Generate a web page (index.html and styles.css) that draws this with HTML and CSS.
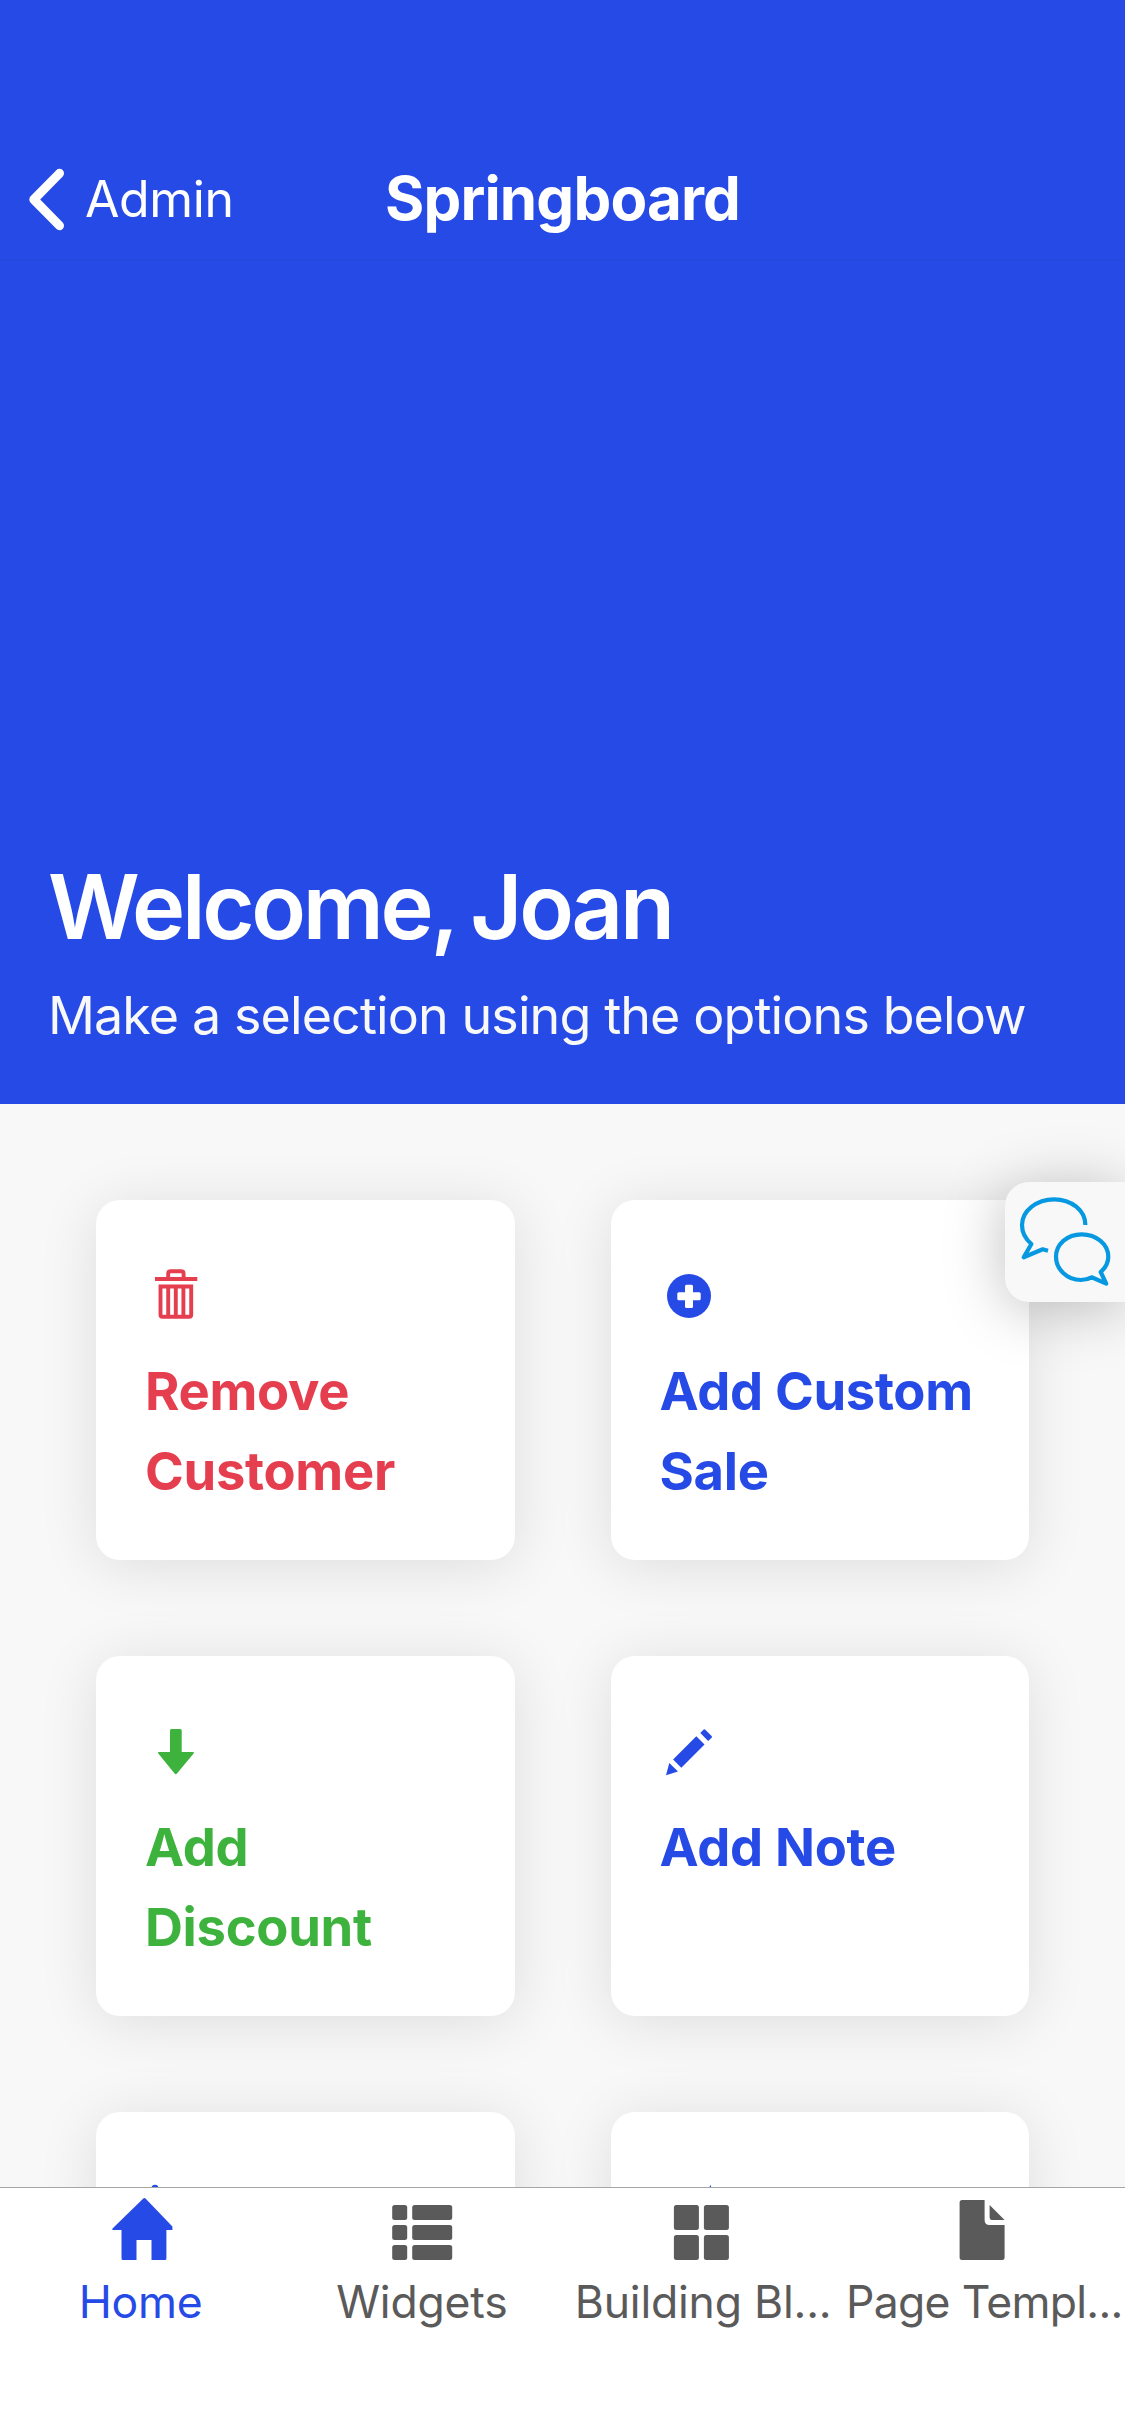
FILE: index.html
```html
<!DOCTYPE html>
<html lang="en">
<head>
<meta charset="utf-8">
<title>Springboard</title>
<link rel="stylesheet" href="styles.css">
</head>
<body>
<div class="app">
  <header class="hero">
    <nav class="navbar">
      <a class="back">
        <svg class="back-icon" width="37" height="64" viewBox="0 0 37 64"><path d="M31.500 6.300 5.800 32.500l25.700 26.200" fill="none" stroke="currentColor" stroke-width="9" stroke-linecap="round" stroke-linejoin="round"/></svg>
        <span class="back-label">Admin</span>
      </a>
      <span class="title">Springboard</span>
    </nav>
    <div class="welcome">
      <h1 class="greeting">Welcome, Joan</h1>
      <p class="hint">Make a selection using the options below</p>
    </div>
  </header>

  <main class="content">
    <div class="cards">
      <a class="card danger">
        <svg class="card-icon" viewBox="0 0 64 96" fill="none" stroke="currentColor" stroke-width="3.900"><path d="M11 31h42.300M24.200 31v-5.500q0-2.300 2.300-2.300h10.800q2.300 0 2.300 2.300V31M16.500 38.500h30.700v28.300q0 2-2 2H18.500q-2 0-2-2ZM24.200 38v31M31.800 38v31M39.400 38v31"/></svg>
        <span class="card-label">Remove Customer</span>
      </a>
      <a class="card primary">
        <svg class="card-icon" viewBox="0 0 64 96" fill="currentColor"><circle cx="30" cy="48" r="22"/><rect x="26" y="36.700" width="8" height="23.300" rx="1.500" fill="#fff"/><rect x="18.300" y="44.300" width="23.400" height="8" rx="1.500" fill="#fff"/></svg>
        <span class="card-label">Add Custom Sale</span>
      </a>
      <a class="card success">
        <svg class="card-icon" viewBox="0 0 64 96" fill="currentColor"><path d="M27.500 25h8.700q1.500 0 1.500 1.500V48H49q1.800 0 .6 1.500L33 69.500q-1.200 1.400-2.400 0L14.300 49.500Q13.200 48 15 48h11V26.500q0-1.500 1.500-1.500Z"/></svg>
        <span class="card-label">Add Discount</span>
      </a>
      <a class="card primary">
        <svg class="card-icon" viewBox="0 0 64 96" fill="currentColor"><path d="m37.300 32.300 8.200 8.300L22.300 63.700l-8.200-8.300ZM10.300 59l8.700 8.400-12 3.900ZM41.300 29l3.100-3.200q.9-.9 1.900 0l6.300 6.200q.9.900 0 1.800L49.200 37Z"/></svg>
        <span class="card-label">Add Note</span>
      </a>
      <a class="card primary">
        <svg class="card-icon" viewBox="0 0 64 96" fill="currentColor"><path d="M7 33q0-3 1-7 3-2.500 6 0 1 4 1 7v35H7Z"/></svg>
      </a>
      <a class="card primary">
        <svg class="card-icon" viewBox="0 0 64 96" fill="currentColor"><path d="M52 24.800 54 70H20Z"/></svg>
      </a>
    </div>
  </main>

  <footer class="tabbar">
    <a class="tab active">
      <svg class="tab-icon" viewBox="0 0 64 64" fill="currentColor"><path d="M34.300 1.600q1.100-1.200 2.200 0L63.400 29.500V33H57.400v28.500q0 1.500-1.500 1.500H42.500V43h-15v20H14q-1.500 0-1.500-1.500V33H4q-1.500 0-.5-1.400Z"/></svg>
      <span class="tab-label">Home</span>
    </a>
    <a class="tab">
      <svg class="tab-icon" viewBox="0 0 64 64" fill="currentColor"><rect x="2.200" y="8" width="15" height="15" rx="2.500"/><rect x="22.200" y="8" width="40" height="15" rx="2.500"/><rect x="2.200" y="28" width="15" height="15" rx="2.500"/><rect x="22.200" y="28" width="40" height="15" rx="2.500"/><rect x="2.200" y="48" width="15" height="15" rx="2.500"/><rect x="22.200" y="48" width="40" height="15" rx="2.500"/></svg>
      <span class="tab-label">Widgets</span>
    </a>
    <a class="tab">
      <svg class="tab-icon" viewBox="0 0 64 64" fill="currentColor"><rect x="2.900" y="8" width="25" height="25" rx="2.500"/><rect x="32.900" y="8" width="25" height="25" rx="2.500"/><rect x="2.900" y="38" width="25" height="25" rx="2.500"/><rect x="32.900" y="38" width="25" height="25" rx="2.500"/></svg>
      <span class="tab-label">Building Bl...</span>
    </a>
    <a class="tab">
      <svg class="tab-icon" viewBox="0 0 64 64" fill="currentColor"><path d="M10.100 3h22.500v20q0 5 5 5h15v32.500q0 2.500-2.500 2.500h-40q-2.500 0-2.500-2.500v-55Q7.600 3 10.100 3ZM37.600 8l15 15H40q-2.400 0-2.400-2.500Z"/></svg>
      <span class="tab-label tight">Page Templ...</span>
    </a>
  </footer>

  <a class="chat">
    <svg viewBox="0 0 120 120" fill="none" stroke="#0699e2" stroke-width="4.200" stroke-linejoin="round"><path d="M80.400 43C80.400 28.500 66.500 17.300 49 17.300S17 29 17 43c0 7.500 3.500 14 9.400 19L18.700 75.300l19-8 5.300 1.400"/><path d="M95.700 90c4.800-4.300 7.600-9.500 7.600-15.300 0-12.400-11.800-22.400-26.600-22.400S51 62.300 51 74.700 62 98 75.700 98q6 0 11-2.700l14.500 6.300Z"/></svg>
  </a>
</div>
</body>
</html>
```
FILE: styles.css
```css
* {
  box-sizing: border-box;
}

body {
  margin: 0;
  font-family: Inter, "Liberation Sans", sans-serif;
  background: #f8f8f8;
}

h1, p {
  margin: 0;
}

.app {
  position: relative;
  display: flex;
  flex-direction: column;
  height: 2436px;
  overflow: hidden;
}

.hero {
  flex: none;
  display: flex;
  flex-direction: column;
  justify-content: space-between;
  height: 1104px;
  padding-top: 132px;
  background: #264ae6;
  color: #fff;
}

.navbar {
  display: grid;
  grid-template-columns: 1fr auto 1fr;
  align-items: center;
  height: 128px;
  border-bottom: 1px solid #2548dc;
}

.back {
  display: flex;
  align-items: center;
  gap: 20px;
  padding: 6px 0 0 28px;
}

.back-icon {
  flex: none;
}

.back-label {
  font-size: 50px;
  letter-spacing: -0.4px;
  line-height: 64px;
}

.title {
  padding-top: 4px;
  font-size: 60px;
  font-weight: 700;
  letter-spacing: -0.85px;
  line-height: 80px;
}

.welcome {
  padding: 0 48px 48px;
}

.greeting {
  margin-bottom: 14px;
  font-size: 90px;
  font-weight: 600;
  letter-spacing: -3.300px;
  word-spacing: -3px;
  line-height: 110px;
}

.hint {
  font-size: 52px;
  letter-spacing: -0.9px;
  line-height: 80px;
  color: #f8f8f8;
}

.content {
  flex: 1;
  min-height: 0;
  overflow: hidden;
  padding: 96px;
}

.cards {
  display: grid;
  grid-template-columns: 1fr 1fr;
  grid-auto-rows: 360px;
  gap: 96px;
}

.card {
  display: flex;
  flex-direction: column;
  gap: 7px;
  padding: 48px;
  border-radius: 24px;
  background: #fff;
  box-shadow: 0 6px 60px rgba(0, 0, 0, 0.11);
}

.card-icon {
  flex: none;
  width: 64px;
  height: 96px;
}

.card-label {
  padding-left: 1px;
  font-size: 52.5px;
  font-weight: 700;
  letter-spacing: -0.3px;
  line-height: 80px;
}

.danger {
  color: #e53f4f;
}

.primary {
  color: #264ae6;
}

.success {
  color: #3db33d;
}

.tabbar {
  flex: none;
  display: grid;
  grid-template-columns: repeat(4, 1fr);
  height: 249px;
  border-top: 1px solid #a6a6a6;
  background: #fff;
}

.tab {
  display: flex;
  flex-direction: column;
  align-items: center;
  padding-top: 9px;
  min-width: 0;
  color: #5a5a5a;
}

.tab.active {
  color: #264ae6;
}

.tab-icon {
  flex: none;
  width: 64px;
  height: 64px;
}

.tab-label {
  margin-top: 11px;
  font-size: 44.5px;
  letter-spacing: -0.2px;
  line-height: 60px;
  white-space: nowrap;
}

.tab-label.tight {
  letter-spacing: -0.7px;
}

/* Support button docked to the right edge, above the cards */
.chat {
  position: absolute;
  top: 1182px;
  right: 0;
  width: 120px;
  height: 120px;
  border-radius: 24px 0 0 24px;
  background: #f8f8f8;
  box-shadow: 0 6px 60px rgba(0, 0, 0, 0.25);
}
```
